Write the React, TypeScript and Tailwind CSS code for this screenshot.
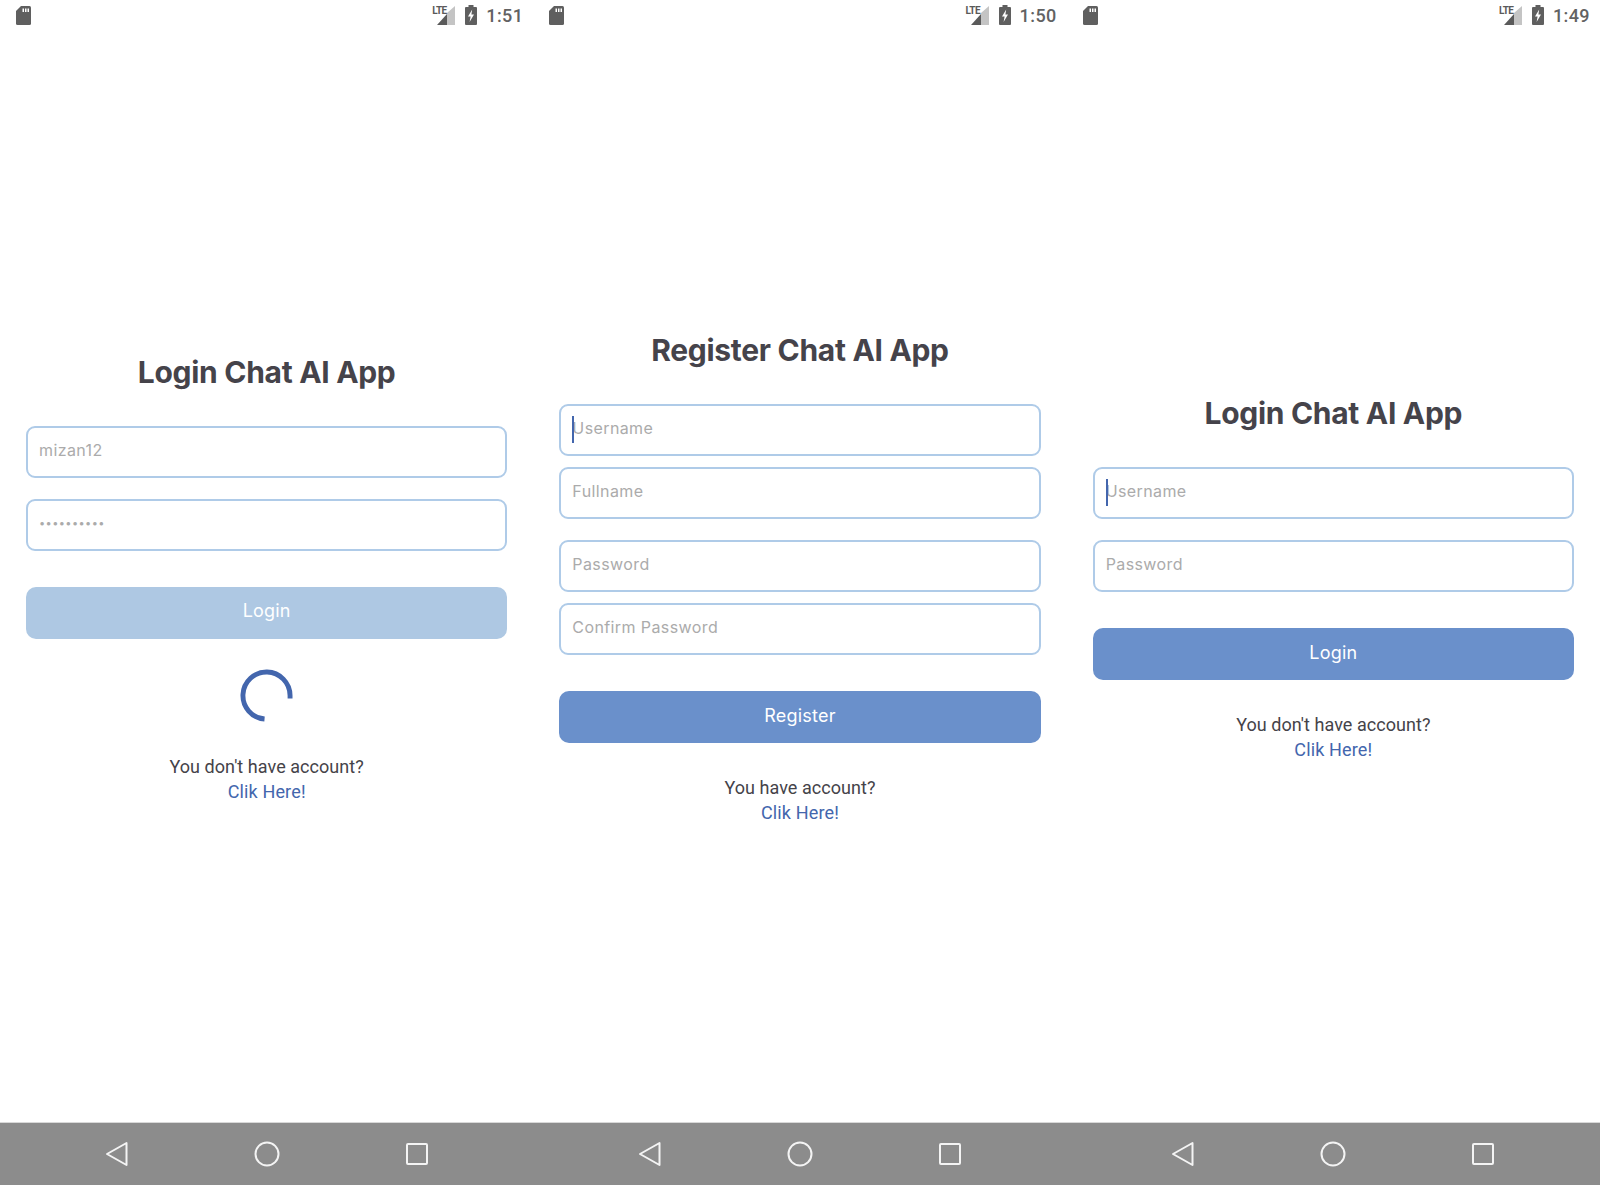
const SdIcon = () => (
  <svg width="15" height="19" viewBox="0 0 15 19" fill="#5f5f5f">
    <path d="M5 0H13.5A1.5 1.5 0 0 1 15 1.5V17.5A1.5 1.5 0 0 1 13.5 19H1.5A1.5 1.5 0 0 1 0 17.5V5Z" />
    <path d="M6.5 2.5H8V6H6.5ZM9 2.5H10.5V6H9ZM11.5 2.5H13V6H11.5Z" fill="#ffffff" />
  </svg>
);

const SignalIcon = () => (
  <div className="relative h-[19px] w-[23px]">
    <svg width="23" height="19" viewBox="0 0 23 19" className="absolute top-0 left-0">
      <path d="M15 7V19H23V0Z" fill="#c4c4c4" />
      <path d="M5 19L15 8V19Z" fill="#5a5a5a" />
    </svg>
    <span className="absolute top-[-1px] left-0 font-['Roboto',sans-serif] text-[10px] leading-[11px] font-bold tracking-[-0.6px] text-[#5a5a5a]">
      LTE
    </span>
  </div>
);

const BatteryIcon = () => (
  <svg width="12" height="20" viewBox="0 0 12 20" fill="#5f5f5f">
    <path d="M3.5 0H8.5V2H11A1 1 0 0 1 12 3V19A1 1 0 0 1 11 20H1A1 1 0 0 1 0 19V3A1 1 0 0 1 1 2H3.5Z" />
    <path d="M7.2 4.5L3 11.5H5.6L4.6 17L9 9.5H6.4Z" fill="#ffffff" />
  </svg>
);

const NavBar = () => (
  <div className="flex h-[63px] items-center justify-center border-t border-[#d8d8d8] bg-[#8c8c8c] pb-[1px]">
    <div className="flex w-[150px] justify-center">
      <svg width="24" height="26" viewBox="0 0 24 26" fill="none" stroke="#f4f4f4" strokeWidth="2" strokeLinejoin="round">
        <path d="M21.5 2V24L2 13Z" />
      </svg>
    </div>
    <div className="flex w-[150px] justify-center">
      <svg width="26" height="26" viewBox="0 0 26 26" fill="none" stroke="#f4f4f4" strokeWidth="2">
        <circle cx="13" cy="13" r="11.5" />
      </svg>
    </div>
    <div className="flex w-[150px] justify-center">
      <svg width="22" height="22" viewBox="0 0 22 22" fill="none" stroke="#f4f4f4" strokeWidth="2" strokeLinejoin="round">
        <rect x="1" y="1" width="20" height="20" rx="1" />
      </svg>
    </div>
  </div>
);

const Field = ({ placeholder, value, caret, dots, className }: { placeholder?: string; value?: string; caret?: boolean; dots?: boolean; className?: string }) => (
  <div className={`relative ${className ?? ''}`}>
    <input
      readOnly
      placeholder={placeholder}
      value={value}
      className={`h-[52px] w-full rounded-[9px] border-2 border-[#afcbe8] bg-white px-[11px] pb-[4px] font-['Inter',sans-serif] text-[#ababab] outline-none placeholder:text-[#ababab] ${dots ? 'text-[11px] tracking-[0.4px]' : 'text-[16px] tracking-[0.4px]'}`}
    />
    {caret && <span className="absolute top-[12px] left-[13px] h-[27px] w-[2px] bg-[#4366ad]" />}
  </div>
);

const Spinner = () => (
  <svg width="53" height="53" viewBox="0 0 54 54" fill="none" stroke="#4366ad" strokeWidth="5" className="mx-auto mt-[30px]">
    <path d="M51 30V27A24 24 0 1 0 25 51" />
  </svg>
);

const Footer = ({ text }: { text: string }) => (
  <div className="mt-[32px] text-center font-['Roboto',sans-serif] text-[18px] leading-[25px] tracking-[0.05px] text-[#454349]">
    <p>{text}</p>
    <a className="tracking-[0.15px] text-[#4366ad]">Clik Here!</a>
  </div>
);

const Phone = ({ time, children }: { time: string; children: React.ReactNode }) => (
  <div className="flex h-[1185px] flex-col bg-white">
    <div className="flex h-[30px] items-center justify-between pr-[10px] pl-[16px]">
      <SdIcon />
      <div className="flex items-center">
        <SignalIcon />
        <div className="mr-[9px] ml-[10px]">
          <BatteryIcon />
        </div>
        <span className="pt-[2px] font-['Roboto',sans-serif] text-[18px] leading-[30px] font-medium tracking-[0.4px] text-[#626262]">{time}</span>
      </div>
    </div>
    <div className="flex flex-1 flex-col justify-center px-[26px]">{children}</div>
    <NavBar />
  </div>
);

const Title = ({ children }: { children: string }) => (
  <h1 className="mb-[31px] text-center font-['Inter',sans-serif] text-[30px] leading-[46px] font-bold tracking-[-0.3px] text-[#45434a]">{children}</h1>
);

const SubmitButton = ({ label, light }: { label: string; light?: boolean }) => (
  <button className={`mt-[36px] flex h-[52px] w-full items-center justify-center rounded-[10px] pb-[4px] font-['Inter',sans-serif] text-[18px] tracking-[0.2px] text-white ${light ? 'bg-[#aec8e3]' : 'bg-[#6a90cb]'}`}>
    {label}
  </button>
);

export default function App() {
  return (
    <div className="grid grid-cols-3">
      <Phone time="1:51">
        <Title>Login Chat AI App</Title>
        <Field value="mizan12" />
        <Field value="••••••••••" dots className="mt-[21px]" />
        <SubmitButton label="Login" light />
        <Spinner />
        <Footer text="You don't have account?" />
      </Phone>
      <Phone time="1:50">
        <Title>Register Chat AI App</Title>
        <Field placeholder="Username" caret />
        <Field placeholder="Fullname" className="mt-[11px]" />
        <Field placeholder="Password" className="mt-[21px]" />
        <Field placeholder="Confirm Password" className="mt-[11px]" />
        <SubmitButton label="Register" />
        <Footer text="You have account?" />
      </Phone>
      <Phone time="1:49">
        <Title>Login Chat AI App</Title>
        <Field placeholder="Username" caret />
        <Field placeholder="Password" className="mt-[21px]" />
        <SubmitButton label="Login" />
        <Footer text="You don't have account?" />
      </Phone>
    </div>
  );
}
